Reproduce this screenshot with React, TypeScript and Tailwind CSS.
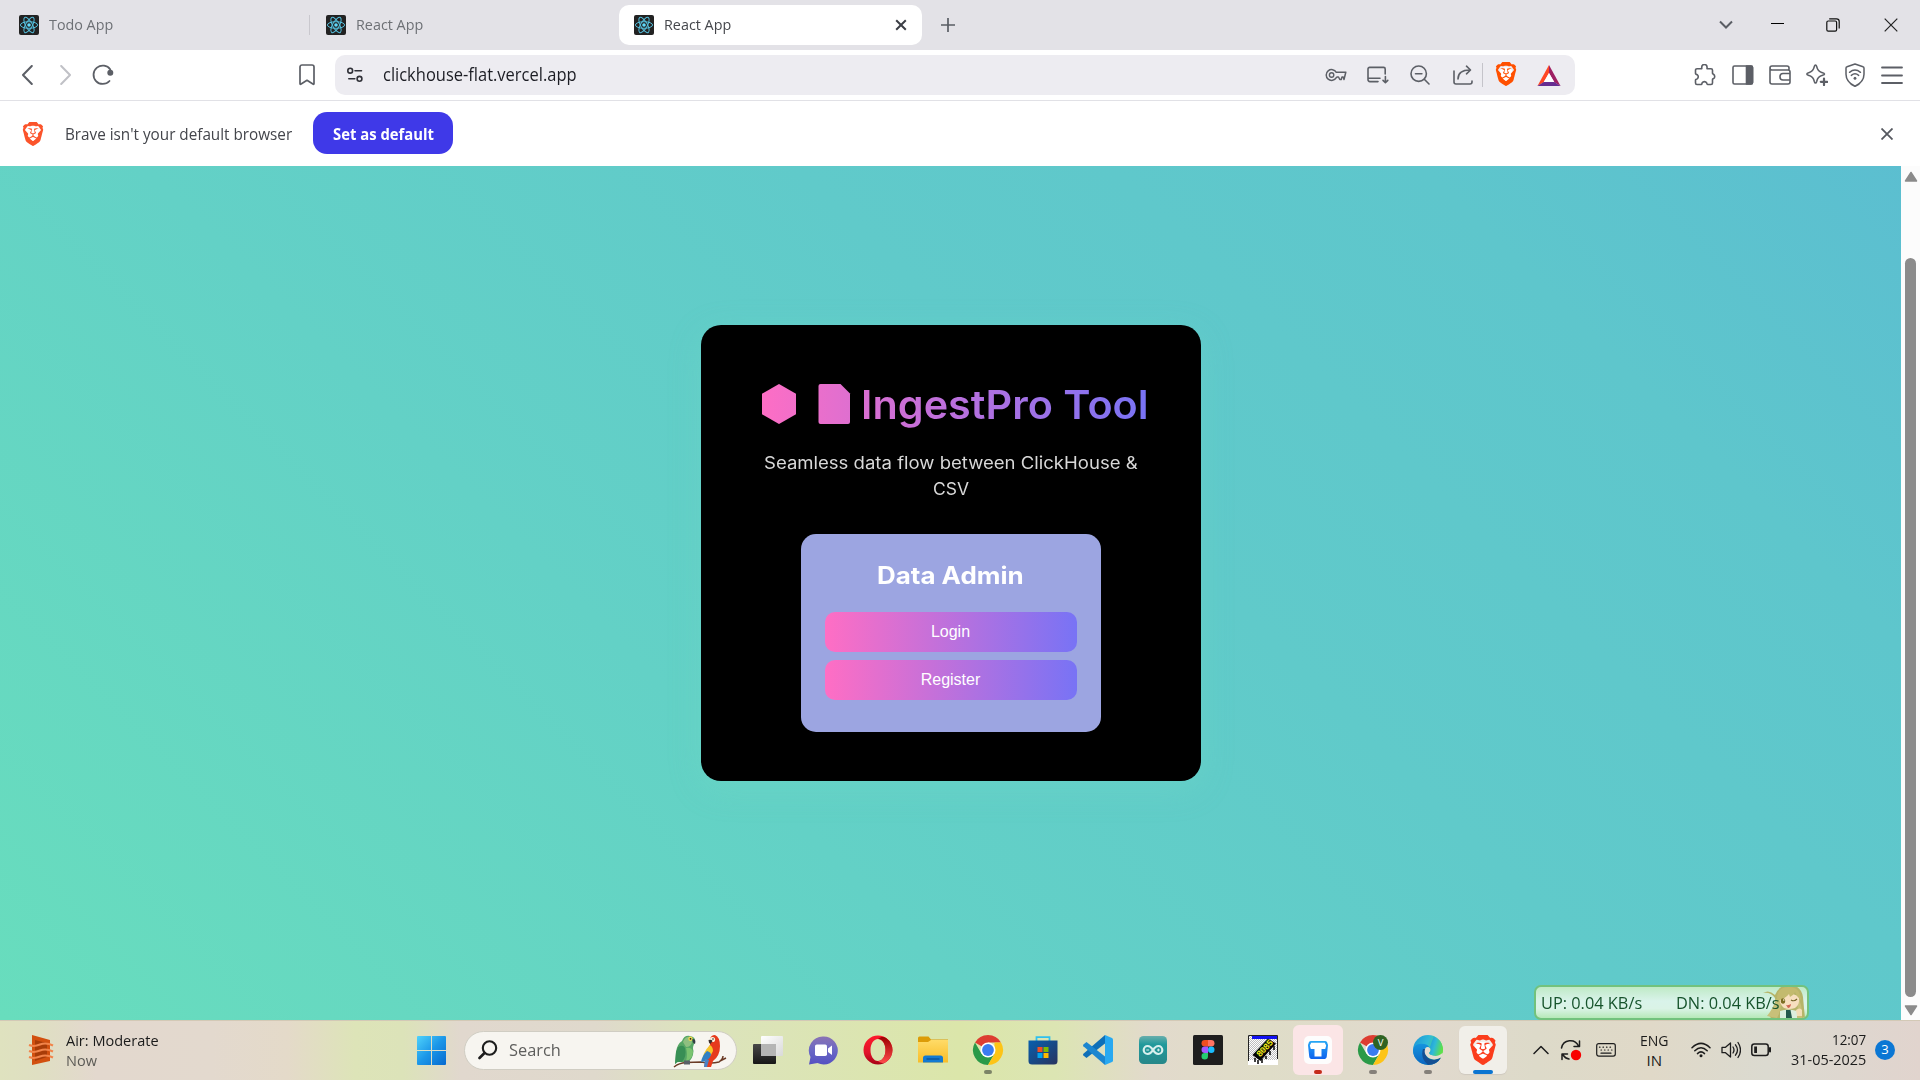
import React, { useLayoutEffect, useRef, useState } from "react";
import { SiBrave } from "react-icons/si";

/** One line of text squeezed or stretched horizontally to a given advance width. */
function Fit({ w, className = "", children }: { w: number; className?: string; children: React.ReactNode }) {
  const ref = useRef<HTMLSpanElement>(null);
  const [scale, setScale] = useState(1);
  useLayoutEffect(() => {
    if (ref.current) setScale(w / ref.current.offsetWidth);
  }, [w]);
  return (
    <span className="block whitespace-nowrap" style={{ width: w }}>
      <span ref={ref} className={`inline-block origin-left ${className}`} style={{ transform: `scaleX(${scale})` }}>
        {children}
      </span>
    </span>
  );
}

const ReactFavicon = () => (
  <svg width="20" height="20" viewBox="0 0 20 20" className="shrink-0">
    <rect width="20" height="20" rx="2" fill="#222" />
    <g fill="none" stroke="#55bfdc" strokeWidth="1">
      <ellipse cx="10" cy="10" rx="8.600" ry="3.300" />
      <ellipse cx="10" cy="10" rx="8.600" ry="3.300" transform="rotate(60 10 10)" />
      <ellipse cx="10" cy="10" rx="8.600" ry="3.300" transform="rotate(120 10 10)" />
    </g>
    <circle cx="10" cy="10" r="1.800" fill="#61dafb" />
  </svg>
);

function Lion({ size, className }: { size: number; className: string }) {
  return (
    <span className="relative block shrink-0">
      <span className="absolute inset-[22%] rounded-full bg-white" />
      <SiBrave size={size} className={`relative ${className}`} />
    </span>
  );
}

function TabStrip() {
  return (
    <div className="flex h-[50px] items-center bg-[#e3e2e7] text-[15px] text-[#6d7075]">
      <div className="flex w-[309px] items-center gap-[10px] pl-[19px]">
        <ReactFavicon />
        <div className="mb-px">
          <Fit w={64}>Todo App</Fit>
        </div>
      </div>
      <div className="h-5 w-px bg-[#c9c8ce]" />
      <div className="flex w-[309px] items-center gap-[10px] pl-4">
        <ReactFavicon />
        <div className="mb-px">
          <Fit w={67}>React App</Fit>
        </div>
      </div>
      <div className="flex h-10 w-[303px] items-center rounded-[10px] bg-white pl-[15px] text-[#45474c]">
        <ReactFavicon />
        <div className="mb-px ml-[10px] flex-1">
          <Fit w={67}>React App</Fit>
        </div>
        <svg width="12" height="12" viewBox="0 0 12 12" className="mr-[15px]" fill="none" stroke="#3b3e45" strokeWidth="2">
          <path d="M1.200 1.200l9.600 9.600M10.800 1.200L1.200 10.800" />
        </svg>
      </div>
      <svg width="14" height="14" viewBox="0 0 14 14" className="ml-[19px]" fill="none" stroke="#5a5d64" strokeWidth="1.700">
        <path d="M7 0v14M0 7h14" />
      </svg>
      <svg width="14" height="10" viewBox="0 0 14 10" className="ml-[764px]" fill="none" stroke="#5a5d64" strokeWidth="2">
        <path d="M1 1.500l6 6 6-6" />
      </svg>
      <div className="mb-[3px] ml-[38px] h-px w-[13px] bg-black" />
      <svg width="14" height="14" viewBox="0 0 14 14" className="ml-[42px]" fill="none" stroke="#111" strokeWidth="1.200">
        <rect x="0.800" y="3" width="9.800" height="10.200" rx="1.400" />
        <path d="M3.200 .800h7.300a2.700 2.700 0 0 1 2.700 2.700v7" />
      </svg>
      <svg width="14" height="14" viewBox="0 0 14 14" className="ml-[44px]" fill="none" stroke="#222" strokeWidth="1.200">
        <path d="M.7.700l12.600 12.600M13.300.700L.7 13.300" />
      </svg>
    </div>
  );
}

function Toolbar() {
  const s = { fill: "none", stroke: "#5c5f66", strokeWidth: 1.6, strokeLinecap: "round", strokeLinejoin: "round" } as const;
  return (
    <div className="flex h-[51px] items-center border-b border-[#e1e1e6] bg-white">
      <svg width="12" height="20" viewBox="0 0 12 20" className="ml-[21px]" {...s} strokeWidth={2}>
        <path d="M10.800 1L2 10l8.800 9" />
      </svg>
      <svg width="12" height="20" viewBox="0 0 12 20" className="ml-[27px]" {...s} stroke="#c0c1c6" strokeWidth={2}>
        <path d="M1.200 1L10 10l-8.800 9" />
      </svg>
      <svg width="22" height="22" viewBox="0 0 22 22" className="ml-5" {...s} strokeWidth={1.8}>
        <path d="M18.300 5.500A9.200 9.200 0 1 0 17.500 17" />
        <circle cx="18.300" cy="8.800" r="2.100" fill="#5c5f66" />
      </svg>
      <svg width="16" height="22" viewBox="0 0 16 22" className="ml-[185px]" {...s} strokeWidth={1.7}>
        <path d="M1 3a2 2 0 0 1 2-2h10a2 2 0 0 1 2 2v16.500q0 1.300-1.100.500L8 16.300 2.100 20q-1.100.800-1.100-.500z" />
      </svg>
      <div className="ml-[20px] flex h-10 w-[1240px] shrink-0 items-center rounded-[10px] bg-[#edecf1]">
        <svg width="16" height="16" viewBox="0 0 16 16" className="ml-3" {...s} stroke="#303138">
          <circle cx="3.200" cy="3.700" r="2.400" />
          <path d="M8 3.700h6.500M1.800 11.800h6" />
          <circle cx="12.500" cy="11.800" r="2.400" />
        </svg>
        <div className="mb-px ml-5 flex-1 text-[17.500px] text-[#1c1d24]">
          <Fit w={194}>clickhouse-flat.vercel.app</Fit>
        </div>
        <svg width="22" height="16" viewBox="0 0 22 16" {...s}>
          <path d="M11.300 5.300A5.400 5.400 0 1 0 11.300 10.700L12 10h1.500l1.300 2.500h1.400L17 10h1.200l.8 2.500 1.800-7.200z" strokeWidth="1.500" />
          <circle cx="6.600" cy="8" r="2.200" strokeWidth="1.400" />
        </svg>
        <svg width="22" height="18" viewBox="0 0 22 18" className="ml-[20px]" {...s}>
          <path d="M11 15.600H3a2 2 0 0 1-2-2V3a1.600 1.600 0 0 1 1.600-1.600h14A1.600 1.600 0 0 1 18.200 3v5M1 12.300h12M18.400 10.500v6M16 14.400l2.400 2.300 2.400-2.300" />
        </svg>
        <svg width="20" height="20" viewBox="0 0 20 20" className="ml-[21px]" {...s}>
          <circle cx="8.700" cy="8.700" r="7.700" />
          <path d="M14.300 14.300L19 19M5.500 8.700h6.400" />
        </svg>
        <svg width="20" height="20" viewBox="0 0 20 20" className="ml-[23px]" {...s}>
          <path d="M1 6v11a2 2 0 0 0 2 2h14a2 2 0 0 0 2-2v-1M5 14c0-5 3.500-9 12-9M13.500 1.200L17.500 5l-4 3.800" />
        </svg>
        <div className="ml-[9px] h-6 w-px bg-[#c5c4ca]" />
        <div className="mb-[2px] ml-[11px]">
          <Lion size={24} className="text-[#ff5000]" />
        </div>
        <svg width="24" height="21" viewBox="0 0 22 20" className="mr-[14px] ml-[19px]">
          <path d="M11 0L0 20l6-3.500L11 7.500z" fill="#ff4724" />
          <path d="M11 0l11 20-6-3.500-5-9z" fill="#9e1f63" />
          <path d="M0 20h22l-6-3.700H6z" fill="#662d91" />
          <path d="M11 7.500l5 8.800H6z" fill="#fff" />
        </svg>
      </div>
      <div className="ml-[119px] flex flex-1 items-center">
        <svg width="22" height="22" viewBox="0 0 22 22" {...s}>
          <path d="M1.500 6.200A1.500 1.500 0 0 1 3 4.700h4.300c.8 0 .4-.8.4-1.500a2.700 2.700 0 0 1 5.400 0c0 .7-.4 1.500.4 1.500H17a1.500 1.500 0 0 1 1.500 1.500v3c0 .8.500.7 1 1a2.600 2.600 0 0 1 0 4.400c-.5.300-1 .2-1 1v3.400a1.500 1.500 0 0 1-1.500 1.500h-3.400c-.9 0-.5-1-1-1.700a2.600 2.600 0 0 0-4.400 0c-.5.700 0 1.700-1 1.700H3a1.500 1.500 0 0 1-1.500-1.500v-3c0-1 .9-.6 1.700-1.100a2.600 2.600 0 0 0 0-4.200c-.8-.5-1.700-.1-1.700-1.100z" />
        </svg>
        <svg width="22" height="20" viewBox="0 0 22 20" className="ml-[16px]" {...s}>
          <rect x="1" y="1" width="19.500" height="18" rx="1.500" />
          <path d="M14.500 1H19a1.500 1.500 0 0 1 1.500 1.500v15A1.500 1.500 0 0 1 19 19h-4.500z" fill="#5c5f66" />
        </svg>
        <svg width="22" height="20" viewBox="0 0 22 20" className="ml-[15px]" {...s}>
          <path d="M20 4.800V3a2 2 0 0 0-2-2H3a2 2 0 0 0-2 2v14a2 2 0 0 0 2 2h16a2 2 0 0 0 2-2V7a2 2 0 0 0-2-2H3a2 2 0 0 1-2-2M21 8.500h-7a3 3 0 0 0-3 3v.5a3 3 0 0 0 3 3h7z" />
        </svg>
        <svg width="22" height="22" viewBox="0 0 22 22" className="ml-[15px]" {...s}>
          <path d="M9.500 1c.7 0 .9.600 1.200 1.600.9 3.500 1.700 4.800 5 5.800 1.700.500 2.800.800 2.800 1.600s-1.100 1-2.800 1.600c-3.300 1-4.100 2.300-5 5.800-.3 1-.5 1.600-1.200 1.600s-.9-.6-1.200-1.600c-.9-3.500-1.700-4.800-5-5.800C1.600 11 .8 10.800.8 10s.8-1.100 2.500-1.600c3.300-1 4.100-2.300 5-5.800C8.600 1.600 8.800 1 9.500 1z" />
          <path d="M18 14.500v6.500M14.800 17.800h6.400" strokeWidth="2.200" />
        </svg>
        <svg width="22" height="24" viewBox="0 0 22 22" preserveAspectRatio="none" className="ml-[16px]" {...s}>
          <path d="M11 .9l8 2.600q1 .3 1 1.300v5.400c0 5-3.500 8.600-9 11.200-5.500-2.600-9-6.200-9-11.200V4.800q0-1 1-1.300z" strokeWidth="1.500" />
          <path d="M5.500 8.500q5.500-4.200 11 0M7.300 11.300q3.700-2.800 7.400 0" strokeWidth="1.400" />
          <circle cx="11" cy="14" r="1.400" fill="#5c5f66" stroke="none" />
        </svg>
        <svg width="22" height="18" viewBox="0 0 22 18" className="ml-[15px]" {...s} strokeWidth={1.8}>
          <path d="M1 1.500h20M1 9.500h20M1 17h20" />
        </svg>
      </div>
    </div>
  );
}

function DefaultBrowserBar() {
  return (
    <div className="flex h-[65px] items-center bg-white">
      <div className="ml-[21px]">
        <Lion size={24} className="text-[#fb542b]" />
      </div>
      <div className="ml-[20px] text-base text-[#43454b]">
        <Fit w={227}>Brave isn&apos;t your default browser</Fit>
      </div>
      <button className="mb-px ml-[21px] flex h-[42px] w-[140px] items-center justify-center rounded-[14px] bg-[#3f39e8] pt-px text-base font-bold text-white">
        <Fit w={101}>Set as default</Fit>
      </button>
      <svg width="12" height="12" viewBox="0 0 12 12" className="mr-[27px] ml-auto" fill="none" stroke="#55585f" strokeWidth="1.800">
        <path d="M.5.500l11 11M11.500.500l-11 11" />
      </svg>
    </div>
  );
}

function Page() {
  return (
    <div className="flex h-[854px]">
      <main className="relative flex w-[1901px] flex-col items-center bg-[linear-gradient(45deg,#68ddbd,#63d1c6_35%,#60caca_58%,#5ec6cc_80%,#5bbdd1)] bg-[length:100%_942px] bg-bottom pt-[159px]">
        <section className="flex h-[456px] w-[500px] flex-col items-center rounded-[20px] bg-black pt-[59px] shadow-[0_8px_32px_rgba(120,225,200,0.25)]">
          <h1 className="relative h-[52px] w-[388px]">
            <svg width="388" height="40" viewBox="0 0 388 40" className="absolute top-0 left-0">
              <defs>
                <linearGradient id="title" gradientUnits="userSpaceOnUse" x1="0" y1="0" x2="388" y2="0">
                  <stop stopColor="#ff6ec4" />
                  <stop offset="1" stopColor="#7873f5" />
                </linearGradient>
              </defs>
              <path d="M22 0l17 9.700v20.600L22 40 5 30.300V9.700z" fill="url(#title)" />
              <path d="M63.500 0h20L93 9.500v28.500a2 2 0 0 1-2 2H63.500a2 2 0 0 1-2-2V2a2 2 0 0 1 2-2z" fill="url(#title)" />
            </svg>
            <span className="ml-[104px] block -translate-y-[5px] font-['Inter'] text-[39.500px] leading-[52px] font-semibold">
              <Fit w={288} className="bg-[linear-gradient(90deg,#da6ed1,#7873f5)] bg-clip-text text-transparent">
                IngestPro Tool
              </Fit>
            </span>
          </h1>
          <p className="mt-[14px] flex flex-col items-center font-['Inter'] text-[17px] leading-[26.400px] text-[#d8d8d8]">
            <Fit w={374}>Seamless data flow between ClickHouse &amp;</Fit>
            <Fit w={36}>CSV</Fit>
          </p>
          <div className="mt-[31px] flex h-[198px] w-[300px] flex-col items-center rounded-[15px] bg-[#9ca5e1] px-6 pt-[24px]">
            <h2 className="font-['Inter'] text-[24px] leading-[36px] font-bold text-white">
              <Fit w={147}>Data Admin</Fit>
            </h2>
            <button className="mt-[18px] h-10 w-full rounded-[10px] bg-[linear-gradient(90deg,#ff6ec4,#7873f5)] font-['Liberation_Sans'] text-base leading-[38px] text-white">
              Login
            </button>
            <button className="mt-2 h-10 w-full rounded-[10px] bg-[linear-gradient(90deg,#ff6ec4,#7873f5)] font-['Liberation_Sans'] text-base leading-[38px] text-white">
              Register
            </button>
          </div>
        </section>
        <NetMeter />
      </main>
      <div className="flex w-[19px] flex-col items-center bg-[#fcfcfc]">
        <svg width="14" height="12" viewBox="0 0 14 12" className="mt-[5px]">
          <path d="M7 1.500l5.500 8.500h-11z" fill="#8b8b8b" stroke="#8b8b8b" strokeWidth="1.500" strokeLinejoin="round" />
        </svg>
        <div className="mt-[75px] h-[739px] w-[11px] rounded-full bg-[#8b8b8b]" />
        <svg width="14" height="12" viewBox="0 0 14 12" className="mt-[7px]">
          <path d="M7 10.500L1.500 2h11z" fill="#8b8b8b" stroke="#8b8b8b" strokeWidth="1.500" strokeLinejoin="round" />
        </svg>
      </div>
    </div>
  );
}

/** Floating network speed widget that sits above the taskbar. */
function NetMeter() {
  return (
    <div className="absolute bottom-0 left-[1534px] flex h-[35px] w-[275px] items-center overflow-hidden rounded-[7px] border-2 border-[#72c27d] bg-[linear-gradient(180deg,#bfeac6,#d9f3ea_45%,#daf3e6_70%,#b6e9b8)] text-[16.500px] text-[#17542c]">
      <div className="ml-[5px] pt-px">
        <Fit w={101}>UP: 0.04 KB/s</Fit>
      </div>
      <div className="relative z-10 ml-[34px] pt-px">
        <Fit w={104}>DN: 0.04 KB/s</Fit>
      </div>
      <svg width="44" height="33" viewBox="0 0 44 33" className="absolute right-0 bottom-0">
        <path d="M0 8q6-4 12 2Q16 0 26 0q12 0 14 12 1 12 2 21H8q-3-2 0-6 5-6 4-14Q8 7 0 8z" fill="#b6b468" />
        <path d="M13 14q-3 10-9 17l10 2q4-7 4-15zM36 14q4 9 3 19h-6z" fill="#c8c079" />
        <path d="M16 11q9-6 20 1 1 8-4 11-6 2-11 0-5-4-5-12z" fill="#f7dfbf" />
        <path d="M14 16Q13 2 26 2q11 0 12 13-4-3-6-8-2 4-5 5l-1-3q-4 5-12 7z" fill="#c3ba6e" />
        <ellipse cx="20" cy="16" rx="2.200" ry="2.800" fill="#7c6d23" />
        <circle cx="20.700" cy="15" r=".8" fill="#fff7da" />
        <path d="M28 15q3 2 6-1" stroke="#76652b" strokeWidth="1.100" fill="none" />
        <path d="M23 20q3 .5 5-1-.500 4-3 4z" fill="#cf6550" />
        <path d="M17 26q8-3 17 0v7H17z" fill="#dbeedd" />
        <path d="M23 25h4.500l1.500 8h-6z" fill="#23584b" />
        <path d="M33 25q4-3 6 0v6h-5z" fill="#f2ddb6" />
      </svg>
    </div>
  );
}

const Chrome = ({ badge = false }: { badge?: boolean }) => (
  <svg width="30" height="30" viewBox="0 0 30 30" className="overflow-visible">
    <path d="M15 15L2 7.500A15 15 0 0 1 28 7.500H15z" fill="#dd3d31" />
    <path d="M2 7.500A15 15 0 0 0 15 30l6.500-11.250L15 15 8.500 18.750z" fill="#2a9a48" />
    <path d="M28 7.500A15 15 0 0 1 15 30l6.500-11.250V7.500z" fill="#fdc417" />
    <circle cx="15" cy="15" r="7.500" fill="#fff" />
    <circle cx="15" cy="15" r="5.900" fill="#3a7cf0" />
    {badge && (
      <>
        <circle cx="22.500" cy="7.500" r="7.500" fill="#2f6322" />
        <text x="22.500" y="11" textAnchor="middle" fontSize="9.500" fill="#fff" fontFamily="Open Sans">V</text>
      </>
    )}
  </svg>
);

const Chat = () => (
  <svg width="30" height="30" viewBox="0 0 30 30">
    <defs>
      <linearGradient id="chat" x1="0" y1="0" x2="0" y2="1"><stop stopColor="#8a73b4" /><stop offset=".5" stopColor="#6a68c5" /><stop offset="1" stopColor="#5550c2" /></linearGradient>
    </defs>
    <path d="M15.500 1.500a14 14 0 1 1-6 26.500L1 29.500l1.500-7.500A14 14 0 0 1 15.500 1.500z" fill="url(#chat)" />
    <rect x="7" y="9.500" width="12" height="11.500" rx="1.800" fill="#fff" />
    <path d="M20 13.500l4-3v9.500l-4-3z" fill="#fff" />
  </svg>
);

const Opera = () => (
  <svg width="30" height="30" viewBox="0 0 30 30">
    <defs>
      <linearGradient id="opA" x1="0" y1="0" x2="0" y2="1"><stop stopColor="#ff1b2d" /><stop offset=".6" stopColor="#e0142a" /><stop offset="1" stopColor="#a70014" /></linearGradient>
      <linearGradient id="opB" x1="0" y1="0" x2="0" y2="1"><stop stopColor="#9c0000" /><stop offset="1" stopColor="#ff4b4b" /></linearGradient>
    </defs>
    <path fillRule="evenodd" d="M15 .5a14.500 14.500 0 1 0 0 29 14.500 14.500 0 1 0 0-29zM15 4c4.500 0 7.500 5 7.500 11s-3 11-7.500 11-7.500-5-7.500-11S10.500 4 15 4z" fill="url(#opA)" />
    <path d="M15 4c3-2.500 6-2.500 8.500-.7a14.500 14.500 0 0 1 0 23.400c-2.500 1.800-5.500 1.800-8.500-.7 4.500 0 7.500-5 7.500-11S19.500 4 15 4z" fill="url(#opB)" />
  </svg>
);

const Folder = () => (
  <svg width="30" height="28" viewBox="0 0 30 28">
    <defs><linearGradient id="fold" x1="0" y1="0" x2="0" y2="1"><stop stopColor="#ffdb67" /><stop offset="1" stopColor="#f8bd28" /></linearGradient></defs>
    <path d="M0 2a1.500 1.500 0 0 1 1.500-1.500h9L13 3.500h17V9H0z" fill="#dc9c08" />
    <path d="M0 6h10l3-2h17v22.500H0z" fill="url(#fold)" />
    <path d="M5 26.500V22a2.500 2.500 0 0 1 2.500-2.500h15A2.500 2.500 0 0 1 25 22v4.500z" fill="#127ad2" />
    <path d="M8.500 23h13" stroke="#084f96" strokeWidth="1.300" />
  </svg>
);

const Store = () => (
  <svg width="30" height="30" viewBox="0 0 30 30">
    <defs><linearGradient id="store" x1="0" y1="0" x2="1" y2="1"><stop stopColor="#075fae" /><stop offset="1" stopColor="#29345f" /></linearGradient></defs>
    <path d="M8.500 6.500V2.200h13v4.300" fill="none" stroke="#2fc0ee" strokeWidth="1.800" />
    <path d="M.5 5.500h29V26a3.500 3.500 0 0 1-3.500 3.500H4A3.500 3.500 0 0 1 .5 26z" fill="url(#store)" />
    <path d="M9.500 12h5v5h-5z" fill="#f25022" /><path d="M15.500 12h5v5h-5z" fill="#7fba00" />
    <path d="M9.500 18h5v5h-5z" fill="#00a4ef" /><path d="M15.500 18h5v5h-5z" fill="#ffb900" />
  </svg>
);

const Code = () => (
  <svg width="30" height="30" viewBox="0 0 30 30">
    <path d="M22 0v8.500L3.500 23 .4 20.500q-.7-.8 0-1.700z" fill="#0e6fb8" />
    <path d="M22 30v-8.500L3.500 7 .4 9.500q-.7.800 0 1.700z" fill="#1b86d0" />
    <path d="M22 0l7 3q1 .5 1 1.500v21q0 1-1 1.500l-7 3z" fill="#28a9f1" />
  </svg>
);

const Arduino = () => (
  <svg width="28" height="28" viewBox="0 0 28 28">
    <defs><linearGradient id="ard" x1="0" y1="0" x2="0" y2="1"><stop stopColor="#69aeac" /><stop offset=".3" stopColor="#219a9c" /><stop offset="1" stopColor="#278789" /></linearGradient></defs>
    <rect width="28" height="28" rx="4.500" fill="url(#ard)" />
    <path d="M14 14q-2.500-4-5.300-4a4 4 0 0 0 0 8q2.800 0 5.300-4t5.300-4a4 4 0 0 1 0 8q-2.800 0-5.300-4z" fill="none" stroke="#d9f0ee" strokeWidth="2.200" />
    <path d="M7.300 14h2.800M18 14h2.800M19.400 12.600v2.800" stroke="#d9f0ee" strokeWidth="1" />
  </svg>
);

const Figma = () => (
  <svg width="30" height="30" viewBox="0 0 30 30">
    <rect width="30" height="30" rx="1.500" fill="#1e1e1e" />
    <path d="M15 5h-3.200a3.250 3.250 0 0 0 0 6.500H15z" fill="#f24e1e" />
    <path d="M15 5h3.200a3.250 3.250 0 0 1 0 6.500H15z" fill="#ff7262" />
    <path d="M15 11.500h-3.200a3.250 3.250 0 0 0 0 6.500H15z" fill="#a259ff" />
    <circle cx="18.250" cy="14.750" r="3.250" fill="#1abcfe" />
    <path d="M15 18h-3.200a3.250 3.250 0 1 0 3.200 3.250z" fill="#24cb71" />
  </svg>
);

const Chip = () => (
  <svg width="30" height="30" viewBox="0 0 30 30">
    <defs>
      <pattern id="grid" width="2" height="2" patternUnits="userSpaceOnUse"><rect width="2" height="2" fill="#fff" /><path d="M0 0h1v1H0zM1 1h1v1H1z" fill="#bdbdbd" /></pattern>
    </defs>
    <rect width="30" height="30" fill="#fff" />
    <rect x="1" y="1" width="28" height="24" fill="url(#grid)" />
    <path d="M4 .5h25.500V4H4z" fill="#1111f2" />
    <path d="M.5 26V.5h29V24" fill="none" stroke="#222" />
    <path d="M4.500 20L20 3.500l8 5L12.500 26z" fill="#050505" />
    <path d="M7 23v4M10 25v4M14 24v4M18 21v3M22 16v4M26 11v4" stroke="#050505" strokeWidth="1.500" />
    <text x="0" y="0" transform="translate(12 22.500) rotate(-47)" fontSize="9" fontWeight="700" fill="#f2ef1a" fontFamily="Liberation Mono" textLength="20">8085</text>
  </svg>
);

const TApp = () => (
  <svg width="28" height="28" viewBox="0 0 28 28">
    <defs><linearGradient id="tap" x1="0" y1="0" x2="0" y2="1"><stop stopColor="#25a7f5" /><stop offset="1" stopColor="#0e62ee" /></linearGradient></defs>
    <rect width="28" height="28" rx="5" fill="#fdfdfd" />
    <path d="M7 5h14a3 3 0 0 1 2 1l1 3-1.200 11.200a3 3 0 0 1-3 2.800H8.200a3 3 0 0 1-3-2.800L4 9l1-3a3 3 0 0 1 2-1z" fill="url(#tap)" />
    <path d="M7.200 6.800h13.600l1.400 2.700-1 3.500h-3.700v7.500H10.500V13H6.800l-1-3.500z" fill="#fff" />
  </svg>
);

const Edge = () => (
  <svg width="30" height="30" viewBox="0 0 30 30">
    <defs>
      <linearGradient id="edgeTop" x1="0" y1="0" x2="1" y2=".4"><stop stopColor="#1a93d8" /><stop offset=".5" stopColor="#2fb9d8" /><stop offset="1" stopColor="#5de04b" /></linearGradient>
      <linearGradient id="edgeBody" x1="0" y1="0" x2="0" y2="1"><stop stopColor="#1494df" /><stop offset="1" stopColor="#0d64c0" /></linearGradient>
    </defs>
    <circle cx="15" cy="15" r="15" fill="url(#edgeTop)" />
    <path d="M0 15Q1 9 8 8.700q8 0 9 5.300-1.500-2.500-4-1.500-3 1.500-1.500 6 2.500 6 9 6.300 4 0 7.500-2.300Q24 30 15 30A15 15 0 0 1 0 15z" fill="url(#edgeBody)" />
    <path d="M10 14q-3 9 5 15.800 8 .5 13-7.300-8 4.500-13.500 0Q11 19 12.500 14z" fill="#134f94" />
    <path d="M12.500 13q2.500-2 4.700.5 1 2-.8 4-.9 1.300 1 2.300 4.600 2 10.200-1 3.400-1 2.400 0l-1.500 3.500q-7 4-13 .4-5.600-4-3-9.700z" fill="#e4dcd2" />
    <path d="M17.500 19.500q5.500 2.800 10 0 3-2.500 2.400-6-1-9-9-12-2 4-4 11 2 2.500-.5 5-.5 1 1.100 2z" fill="url(#edgeTop)" />
  </svg>
);

const TaskView = () => (
  <svg width="30" height="28" viewBox="0 0 30 28">
    <defs>
      <linearGradient id="tvd" x1="0" y1="0" x2="0" y2="1"><stop stopColor="#484848" /><stop offset="1" stopColor="#171717" /></linearGradient>
      <linearGradient id="tvl" x1="0" y1="0" x2="1" y2="1"><stop stopColor="#fff" /><stop offset="1" stopColor="#d9d9d9" /></linearGradient>
    </defs>
    <rect y="8" width="23" height="20" rx="1" fill="url(#tvd)" />
    <rect x="8" width="22" height="20" rx="1" fill="url(#tvl)" />
    <path d="M8 8h15v12H8z" fill="#b5b5b5" />
  </svg>
);

const Windows = () => (
  <svg width="29" height="29" viewBox="0 0 29 29">
    <defs><linearGradient id="win" gradientUnits="userSpaceOnUse" x1="0" y1="0" x2="29" y2="29"><stop stopColor="#4fd2fb" /><stop offset=".5" stopColor="#1c97e8" /><stop offset="1" stopColor="#0669cf" /></linearGradient></defs>
    <path d="M1 0h13v14H0V1a1 1 0 0 1 1-1zM15 0h13a1 1 0 0 1 1 1v13H15zM0 15h14v14H1a1 1 0 0 1-1-1zM15 15h14v13a1 1 0 0 1-1 1H15z" fill="url(#win)" />
  </svg>
);

const Parrots = () => (
  <svg width="56" height="33" viewBox="0 0 56 33">
    <path d="M1 32q5-4 12-4.500l15-.500q10 2 18 0 4-3 4-6M47 26l6-3" fill="none" stroke="#6b3b26" strokeWidth="1.500" />
    <path d="M2 29l1-12Q4 9 9 6q2-6 8-5 6 1 5 6-3 5-1.500 9Q20 24 15 27H8q-3-1-6 2z" fill="#57a765" />
    <path d="M10 7q2-6 8-5l1 5q-1 5-6 5z" fill="#8fbf80" />
    <path d="M5 12q5-3 7 1 2 8-3 14H4l-2 2 1-12z" fill="#388f55" />
    <path d="M13 13q6-1 7 4-1 8-7 9 2-7 0-13z" fill="#7ac36f" />
    <circle cx="17.500" cy="3.800" r="2.200" fill="#efd94d" /><circle cx="17.500" cy="3.800" r=".9" fill="#222" />
    <path d="M19.500 4q4 0 2.500 5-3-1-2.500-5z" fill="#333c42" />
    <path d="M11 25.500h6v4h-6z" fill="#5b6068" />
    <path d="M37 4q1-4 5-4 5 2 5 11 0 10-7 15l-2 6h-7l2-9q0-8 4-13z" fill="#e63a1d" />
    <path d="M37 10q3 2 3 6-3 8-11 10 1-9 8-16z" fill="#f6c52b" />
    <path d="M34 16q4 1 4 4-2 6-10 7 1-6 6-11z" fill="#317fc4" />
    <path d="M32 24l4 1-2 7h-3z" fill="#4c82c4" />
    <circle cx="39.500" cy="4.500" r="2.600" fill="#fff3df" /><circle cx="40" cy="4" r=".8" fill="#222" />
    <path d="M35.500 5q3-1 4 1l-2 3q-2-1-2-4z" fill="#3e302e" />
  </svg>
);

function Pinned({ children, mark = "", tile = "" }: { children: React.ReactNode; mark?: string; tile?: string }) {
  return (
    <div className="relative flex h-[60px] w-[55px] items-center justify-center">
      {tile && <div className={`absolute rounded-md ${tile}`} />}
      <div className="relative">{children}</div>
      {mark && <div className={`absolute bottom-[6px] h-1 rounded-full ${mark}`} />}
    </div>
  );
}

function Taskbar() {
  const t = { fill: "none", stroke: "#1d1d1d", strokeWidth: 1.5, strokeLinecap: "round", strokeLinejoin: "round" } as const;
  return (
    <div className="flex h-[60px] items-center bg-[linear-gradient(90deg,#dfe2bf_0%,#dfdfc2_2%,#e3d8ce_5%,#e3d9ce_11%,#e4dac9_15%,#dde4b8_18.500%,#dce3b9_21%,#e1d8ce_24%,#dfd9cc_31%,#dce3bd_36%,#dbe6aa_50%,#dce5b3_55%,#e2dacc_60%,#dfddc8_66%,#e1d9ce_74%,#dddac9_80%,#e0d9c8_86%,#dbdad0_92%,#e1d4ce_100%)] text-[15px] text-[#1b1b1b] shadow-[inset_0_1px_0_#d3c9b6]">
      <svg width="26" height="30" viewBox="0 0 26 30" className="ml-[28px]">
        <path d="M4 0l18 5v21L4 30z" fill="#d2500f" />
        <path d="M7 5l12 3v14L7 26z" fill="#a83c08" />
        <path d="M1 10q5 2 11-.500t13 1M1 16q5 2 11-.500t13 1M1 22q5 2 11-.500t13 1" fill="none" stroke="#f2844a" strokeWidth="2" />
      </svg>
      <div className="mb-px ml-[12px] w-[351px] leading-[20px]">
        <Fit w={93}>Air: Moderate</Fit>
        <Fit w={31} className="text-[#5b5a55]">Now</Fit>
      </div>
      <Windows />
      <div className="ml-[18px] flex h-[39px] w-[273px] items-center rounded-full border border-[#d0cdc3] bg-[#f7f5f0] text-[17px] text-[#5e5e5c]">
        <svg width="20" height="20" viewBox="0 0 20 20" className="ml-[13px]" fill="none" stroke="#1d1d1d" strokeWidth="2.100" strokeLinecap="round">
          <circle cx="11.500" cy="8" r="6.700" />
          <path d="M6.500 13L1.500 18" strokeWidth="2.600" />
        </svg>
        <div className="ml-[11px] flex-1">
          <Fit w={52}>Search</Fit>
        </div>
        <div className="mt-[2px] mr-[7px]">
          <Parrots />
        </div>
      </div>
      <div className="ml-[3px] flex">
        <Pinned><TaskView /></Pinned>
        <Pinned><Chat /></Pinned>
        <Pinned><Opera /></Pinned>
        <Pinned><Folder /></Pinned>
        <Pinned mark="w-2 bg-[#7c8467]"><Chrome /></Pinned>
        <Pinned><Store /></Pinned>
        <Pinned><Code /></Pinned>
        <Pinned><Arduino /></Pinned>
        <Pinned><Figma /></Pinned>
        <Pinned><Chip /></Pinned>
        <Pinned tile="size-[50px] bg-[#fbe5e6]" mark="w-2 bg-[#c42b1c]"><TApp /></Pinned>
        <Pinned mark="w-2 bg-[#85807a]"><Chrome badge /></Pinned>
        <Pinned mark="w-2 bg-[#85807a]"><Edge /></Pinned>
        <Pinned tile="size-12 bg-[#f1efe9] shadow-[0_1px_1px_#cfc9bf]" mark="w-5 bg-[#0b75d1]"><Lion size={30} className="text-[#fb3d1c]" /></Pinned>
      </div>
      <svg width="16" height="10" viewBox="0 0 16 10" className="ml-[23px]" {...t}>
        <path d="M1 8.500l7-7 7 7" />
      </svg>
      <svg width="22" height="22" viewBox="0 0 22 22" className="ml-[11px]" {...t}>
        <path d="M1.500 9A9 9 0 0 1 18.500 7M19.500 2v5.500H14M9 20A9 9 0 0 1 3 16M2 20.500V15h5.500" />
        <circle cx="16" cy="16" r="5.200" fill="#f80000" stroke="none" />
      </svg>
      <svg width="20" height="14" viewBox="0 0 20 14" className="mb-px ml-[14px]" {...t} strokeWidth={1.2}>
        <rect x=".7" y=".7" width="18.600" height="12.400" rx="2" />
        <path d="M3.500 4.200h.5M7 4.200h.5M10.500 4.200h.5M14 4.200h.5M5 7h.5M8.500 7h.5M12 7h.5M15.500 7h.5M5 10.200h10" />
      </svg>
      <div className="mb-px ml-[24px] flex w-[28px] flex-col items-center leading-[20px]">
        <Fit w={29}>ENG</Fit>
        <Fit w={15}>IN</Fit>
      </div>
      <svg width="20" height="16" viewBox="0 0 20 16" className="mb-px ml-[23px]" {...t}>
        <path d="M1 5.800Q10-3 19 5.800M3.800 8.800q6.200-6 12.400 0M6.500 11.600q3.500-3.400 7 0" />
        <circle cx="10" cy="13.800" r="1.500" fill="#1d1d1d" stroke="none" />
      </svg>
      <svg width="20" height="18" viewBox="0 0 20 18" className="mb-px ml-[10px]" {...t} strokeWidth={1.3}>
        <path d="M1 6.300h3.500L9.500 2v14l-5-4.300H1zM12 6q2 3 0 6M14.500 3.800q4 5.200 0 10.400M17 1.500q5 7.500 0 15" />
      </svg>
      <svg width="21" height="14" viewBox="0 0 21 14" className="mb-px ml-[10px]" {...t}>
        <rect x=".8" y="1" width="16.400" height="11.500" rx="2.500" />
        <rect x="3.200" y="3.500" width="2.800" height="6.500" fill="#1d1d1d" stroke="none" />
        <path d="M19 5v3.500" strokeWidth="2" />
      </svg>
      <div className="mb-[2px] ml-auto flex flex-col items-end leading-[20px]">
        <Fit w={34}>12:07</Fit>
        <Fit w={75}>31-05-2025</Fit>
      </div>
      <div className="mr-[25px] ml-[9px] flex size-5 items-center justify-center rounded-full bg-[#0b77d4] text-[13px] text-white">3</div>
    </div>
  );
}

export default function App() {
  return (
    <div className="h-[1080px] w-[1920px] overflow-hidden font-['Open_Sans',sans-serif]">
      <TabStrip />
      <Toolbar />
      <DefaultBrowserBar />
      <Page />
      <Taskbar />
    </div>
  );
}
